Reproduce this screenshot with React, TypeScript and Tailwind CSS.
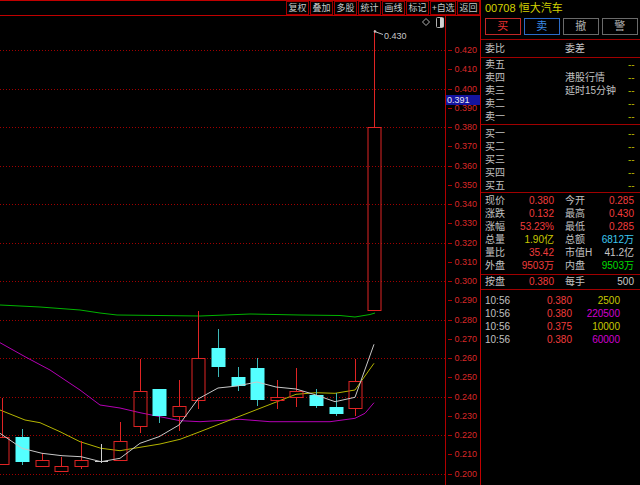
const FONT = { fontFamily: '"Liberation Sans", "Noto Sans CJK SC", sans-serif' };

const y = (p: number) => 50 + (0.42 - p) * 1925;

// center, bodyTop, bodyBottom, wickTop, wickBottom, kind
type Candle = [number, number, number, number, number, 'up' | 'down' | 'doji'];
const candles: Candle[] = [
  [2, 437, 464, 398, 464, 'up'],
  [22, 437, 462, 429, 465, 'down'],
  [42, 460, 466, 453, 467, 'up'],
  [61, 466, 471, 457, 471, 'up'],
  [81, 460, 466, 441, 469, 'up'],
  [101, 461, 461, 444, 463, 'doji'],
  [120, 441, 460, 422, 460, 'up'],
  [140, 391, 426, 359, 433, 'up'],
  [159, 389, 416, 389, 423, 'down'],
  [179, 406, 416, 380, 431, 'up'],
  [198, 358, 400, 311, 409, 'up'],
  [218, 348, 367, 329, 377, 'down'],
  [238, 377, 386, 367, 391, 'down'],
  [257, 368, 400, 358, 406, 'down'],
  [277, 397, 400, 380, 409, 'up'],
  [296, 391, 397, 368, 407, 'up'],
  [316, 395, 406, 389, 408, 'down'],
  [336, 407, 414, 393, 416, 'down'],
  [355, 381, 408, 359, 416, 'up'],
  [374, 127, 310, 30, 310, 'up'],
];

const pts = (a: number[][]) => a.map(([px, py]) => `${px},${py}`).join(' ');

const green = [[0, 305], [40, 307], [80, 310], [100, 313], [117, 315], [200, 316], [250, 314], [300, 315], [340, 315.5], [355, 317], [370, 314.5], [375, 313]];
const magenta = [[0, 342.7], [25, 356.7], [50, 370], [80, 390], [100, 405], [120, 408], [140, 412.7], [160, 416.7], [180, 420.7], [200, 421.7], [240, 419.3], [270, 421.7], [330, 421.7], [355, 418.3], [365, 413.3], [374, 402.7]];
const yellow = [[0, 410], [25, 420], [40, 422.7], [60, 431.7], [80, 441.7], [101, 448.3], [120, 450.7], [140, 447.3], [160, 444], [180, 439.3], [200, 431.7], [296, 394.3], [316, 392.7], [335, 393.3], [355, 390], [374, 363.3]];
const white = [[0, 433.3], [22, 448.3], [42, 453.3], [62, 455.7], [81, 456.7], [101, 461.7], [120, 458.3], [140, 443.3], [159, 436.7], [179, 425], [198, 399], [218, 388], [237, 386], [257, 382], [276, 387], [296, 389], [316, 395], [335, 401.7], [355, 397.3], [374, 344.3]];

const levels = Array.from({ length: 23 }, (_, i) => 0.42 - i * 0.01);

function Chart() {
  return (
    <svg width={480} height={469} viewBox="0 16 480 469" className="block">
      {/* grid */}
      {levels.filter((_, i) => i % 2 === 0).map((p) => (
        <line key={p} x1={0} x2={445} y1={Math.round(y(p)) + 0.5} y2={Math.round(y(p)) + 0.5} stroke="#a00000" strokeDasharray="1 2" />
      ))}
      {/* axis */}
      <line x1={445.5} x2={445.5} y1={16} y2={485} stroke="#b00000" />
      {levels.map((p) => (
        <g key={p}>
          <line x1={448} x2={452} y1={Math.round(y(p)) + 0.5} y2={Math.round(y(p)) + 0.5} stroke="#b00000" />
          <text x={477} y={y(p) + 3.2} textAnchor="end" fontSize={9} fill="#d82828" style={FONT}>
            {p.toFixed(3)}
          </text>
        </g>
      ))}
      {/* moving averages */}
      <polyline points={pts(green)} fill="none" stroke="#00b400" strokeWidth={1} />
      <polyline points={pts(magenta)} fill="none" stroke="#b400b4" strokeWidth={1} />
      <polyline points={pts(yellow)} fill="none" stroke="#b4b400" strokeWidth={1} />
      {/* candles */}
      {candles.map(([c, bt, bb, wt, wb, kind]) => {
        const cx = c + 0.5;
        if (kind === 'doji')
          return (
            <g key={c}>
              <line x1={cx} x2={cx} y1={wt} y2={wb} stroke="#d0d0d0" />
              <line x1={c - 6} x2={c + 7} y1={bt + 0.5} y2={bt + 0.5} stroke="#d0d0d0" />
            </g>
          );
        if (kind === 'down')
          return (
            <g key={c}>
              <line x1={cx} x2={cx} y1={wt} y2={wb} stroke="#3cb8b8" />
              <rect x={c - 6.5} y={bt} width={14} height={bb - bt} fill="#54ffff" />
            </g>
          );
        return (
          <g key={c}>
            <line x1={cx} x2={cx} y1={wt} y2={bt} stroke="#e02424" />
            <line x1={cx} x2={cx} y1={bb} y2={wb} stroke="#e02424" />
            <rect x={c - 6} y={bt + 0.5} width={13} height={bb - bt} fill="none" stroke="#e02424" />
          </g>
        );
      })}
      <polyline points={pts(white)} fill="none" stroke="#c8c8c8" strokeWidth={1} />
      {/* high marker */}
      <circle cx={375} cy={31.5} r={1.3} fill="#c0c0c0" />
      <line x1={376} y1={32} x2={383} y2={34.5} stroke="#c0c0c0" />
      <text x={384} y={38.5} fontSize={9} fill="#c8c8c8" style={FONT}>0.430</text>
      {/* icons */}
      <path d="M426 18.5 L429.5 22 L426 25.5 L422.5 22 Z" fill="none" stroke="#b0b0b0" />
      <rect x={436.5} y={17.5} width={7} height={10} rx={1} fill="none" stroke="#b0b0b0" />
      <rect x={440} y={18} width={3.5} height={9} fill="#d0d0d0" />
      {/* cursor price */}
      <rect x={446} y={95} width={34} height={10} fill="#1414a0" />
      <text x={447} y={103.3} fontSize={9} fill="#e8e8f0" style={FONT}>0.391</text>
    </svg>
  );
}

const tools = ['复权', '叠加', '多股', '统计', '画线', '标记', '+自选', '返回'];

function Toolbar() {
  return (
    <div className="flex h-[16px] justify-end gap-px border-y border-[#c00000]">
      {tools.map((t) => (
        <div
          key={t}
          className={`flex h-full items-center justify-center whitespace-nowrap border border-[#a00000] text-[9px] leading-none text-[#c8c8c8] ${t === '+自选' ? 'w-[26px] tracking-[-0.3px]' : 'w-[23px]'}`}
        >
          {t}
        </div>
      ))}
    </div>
  );
}

const C = {
  label: 'text-[#c0c0c0]',
  red: 'text-[#f03c3c]',
  yellow: 'text-[#c8c800]',
  cyan: 'text-[#3cc8f0]',
  green: 'text-[#00dc00]',
  magenta: 'text-[#d000d0]',
  gray: 'text-[#c8c8c8]',
};

function Pair({ l, v, vc }: { l: string; v: string; vc: string }) {
  return (
    <div className="flex w-[69px] justify-between">
      <span className={C.label}>{l}</span>
      <span className={vc}>{v}</span>
    </div>
  );
}

function StatRow({ a, b }: { a: [string, string, string]; b: [string, string, string] }) {
  return (
    <div className="flex h-[13px] items-center pl-[4px]">
      <Pair l={a[0]} v={a[1]} vc={a[2]} />
      <div className="ml-[11px]">
        <Pair l={b[0]} v={b[1]} vc={b[2]} />
      </div>
    </div>
  );
}

function BookRow({ l, mid }: { l: string; mid?: string }) {
  return (
    <div className="flex h-[13px] items-center pl-[4px]">
      <span className={`w-[80px] ${C.label}`}>{l}</span>
      <span className={`w-[63px] ${C.label}`}>{mid ?? ''}</span>
      <span className="text-[#b4b400]">--</span>
    </div>
  );
}

function TickRow({ p, v, vc }: { p: string; v: string; vc: string }) {
  return (
    <div className="flex h-[13px] items-center pl-[4px]">
      <span className={`w-[40px] ${C.label}`}>10:56</span>
      <span className={`w-[47px] text-right ${C.red}`}>{p}</span>
      <span className={`w-[48px] text-right ${vc}`}>{v}</span>
    </div>
  );
}

function Side() {
  return (
    <div className="flex w-[160px] flex-col border-l border-[#c00000] text-[10px] leading-none">
      <div className="flex h-[17px] items-center pl-[4px] text-[11px] text-[#d4d400]">00708 恒大汽车</div>
      <div className="flex h-[18px] gap-[3.5px] pl-[4px] pt-[1px]">
        <div className="flex w-[35.5px] items-center justify-center border border-[#c02828] text-[11px] text-[#e83030]">买</div>
        <div className="flex w-[35.5px] items-center justify-center border border-[#2c6cc8] text-[11px] text-[#3c8ce8]">卖</div>
        <div className="flex w-[35.5px] items-center justify-center border border-[#6a6a6a] text-[11px] text-[#b0b0b0]">撤</div>
        <div className="flex w-[35.5px] items-center justify-center border border-[#6a6a6a] text-[11px] text-[#b0b0b0]">警</div>
      </div>
      <div className="h-[5px] border-b border-[#a00000]" />
      <div className="flex h-[18px] items-center border-b border-[#a00000] pl-[4px]">
        <span className={`w-[80px] ${C.label}`}>委比</span>
        <span className={C.label}>委差</span>
      </div>
      <div className="h-[67px] border-b border-[#a00000]">
        <BookRow l="卖五" />
        <BookRow l="卖四" mid="港股行情" />
        <BookRow l="卖三" mid="延时15分钟" />
        <BookRow l="卖二" />
        <BookRow l="卖一" />
      </div>
      <div className="h-[68px] border-b border-[#a00000] pt-[2px]">
        <BookRow l="买一" />
        <BookRow l="买二" />
        <BookRow l="买三" />
        <BookRow l="买四" />
        <BookRow l="买五" />
      </div>
      <div className="h-[82px] border-b border-[#a00000] pt-[1px]">
        <StatRow a={['现价', '0.380', C.red]} b={['今开', '0.285', C.red]} />
        <StatRow a={['涨跌', '0.132', C.red]} b={['最高', '0.430', C.red]} />
        <StatRow a={['涨幅', '53.23%', C.red]} b={['最低', '0.285', C.red]} />
        <StatRow a={['总量', '1.90亿', C.yellow]} b={['总额', '6812万', C.cyan]} />
        <StatRow a={['量比', '35.42', C.red]} b={['市值H', '41.2亿', C.gray]} />
        <StatRow a={['外盘', '9503万', C.red]} b={['内盘', '9503万', C.green]} />
      </div>
      <div className="flex h-[15px] items-center border-b border-[#a00000]">
        <StatRow a={['按盘', '0.380', C.red]} b={['每手', '500', C.gray]} />
      </div>
      <div className="pt-[4px]">
        <TickRow p="0.380" v="2500" vc={C.yellow} />
        <TickRow p="0.380" v="220500" vc={C.magenta} />
        <TickRow p="0.375" v="10000" vc={C.yellow} />
        <TickRow p="0.380" v="60000" vc={C.magenta} />
      </div>
    </div>
  );
}

export default function App() {
  return (
    <div className="flex h-[485px] w-[640px] overflow-hidden bg-black" style={FONT}>
      <div className="flex w-[480px] flex-col">
        <Toolbar />
        <Chart />
      </div>
      <Side />
    </div>
  );
}
